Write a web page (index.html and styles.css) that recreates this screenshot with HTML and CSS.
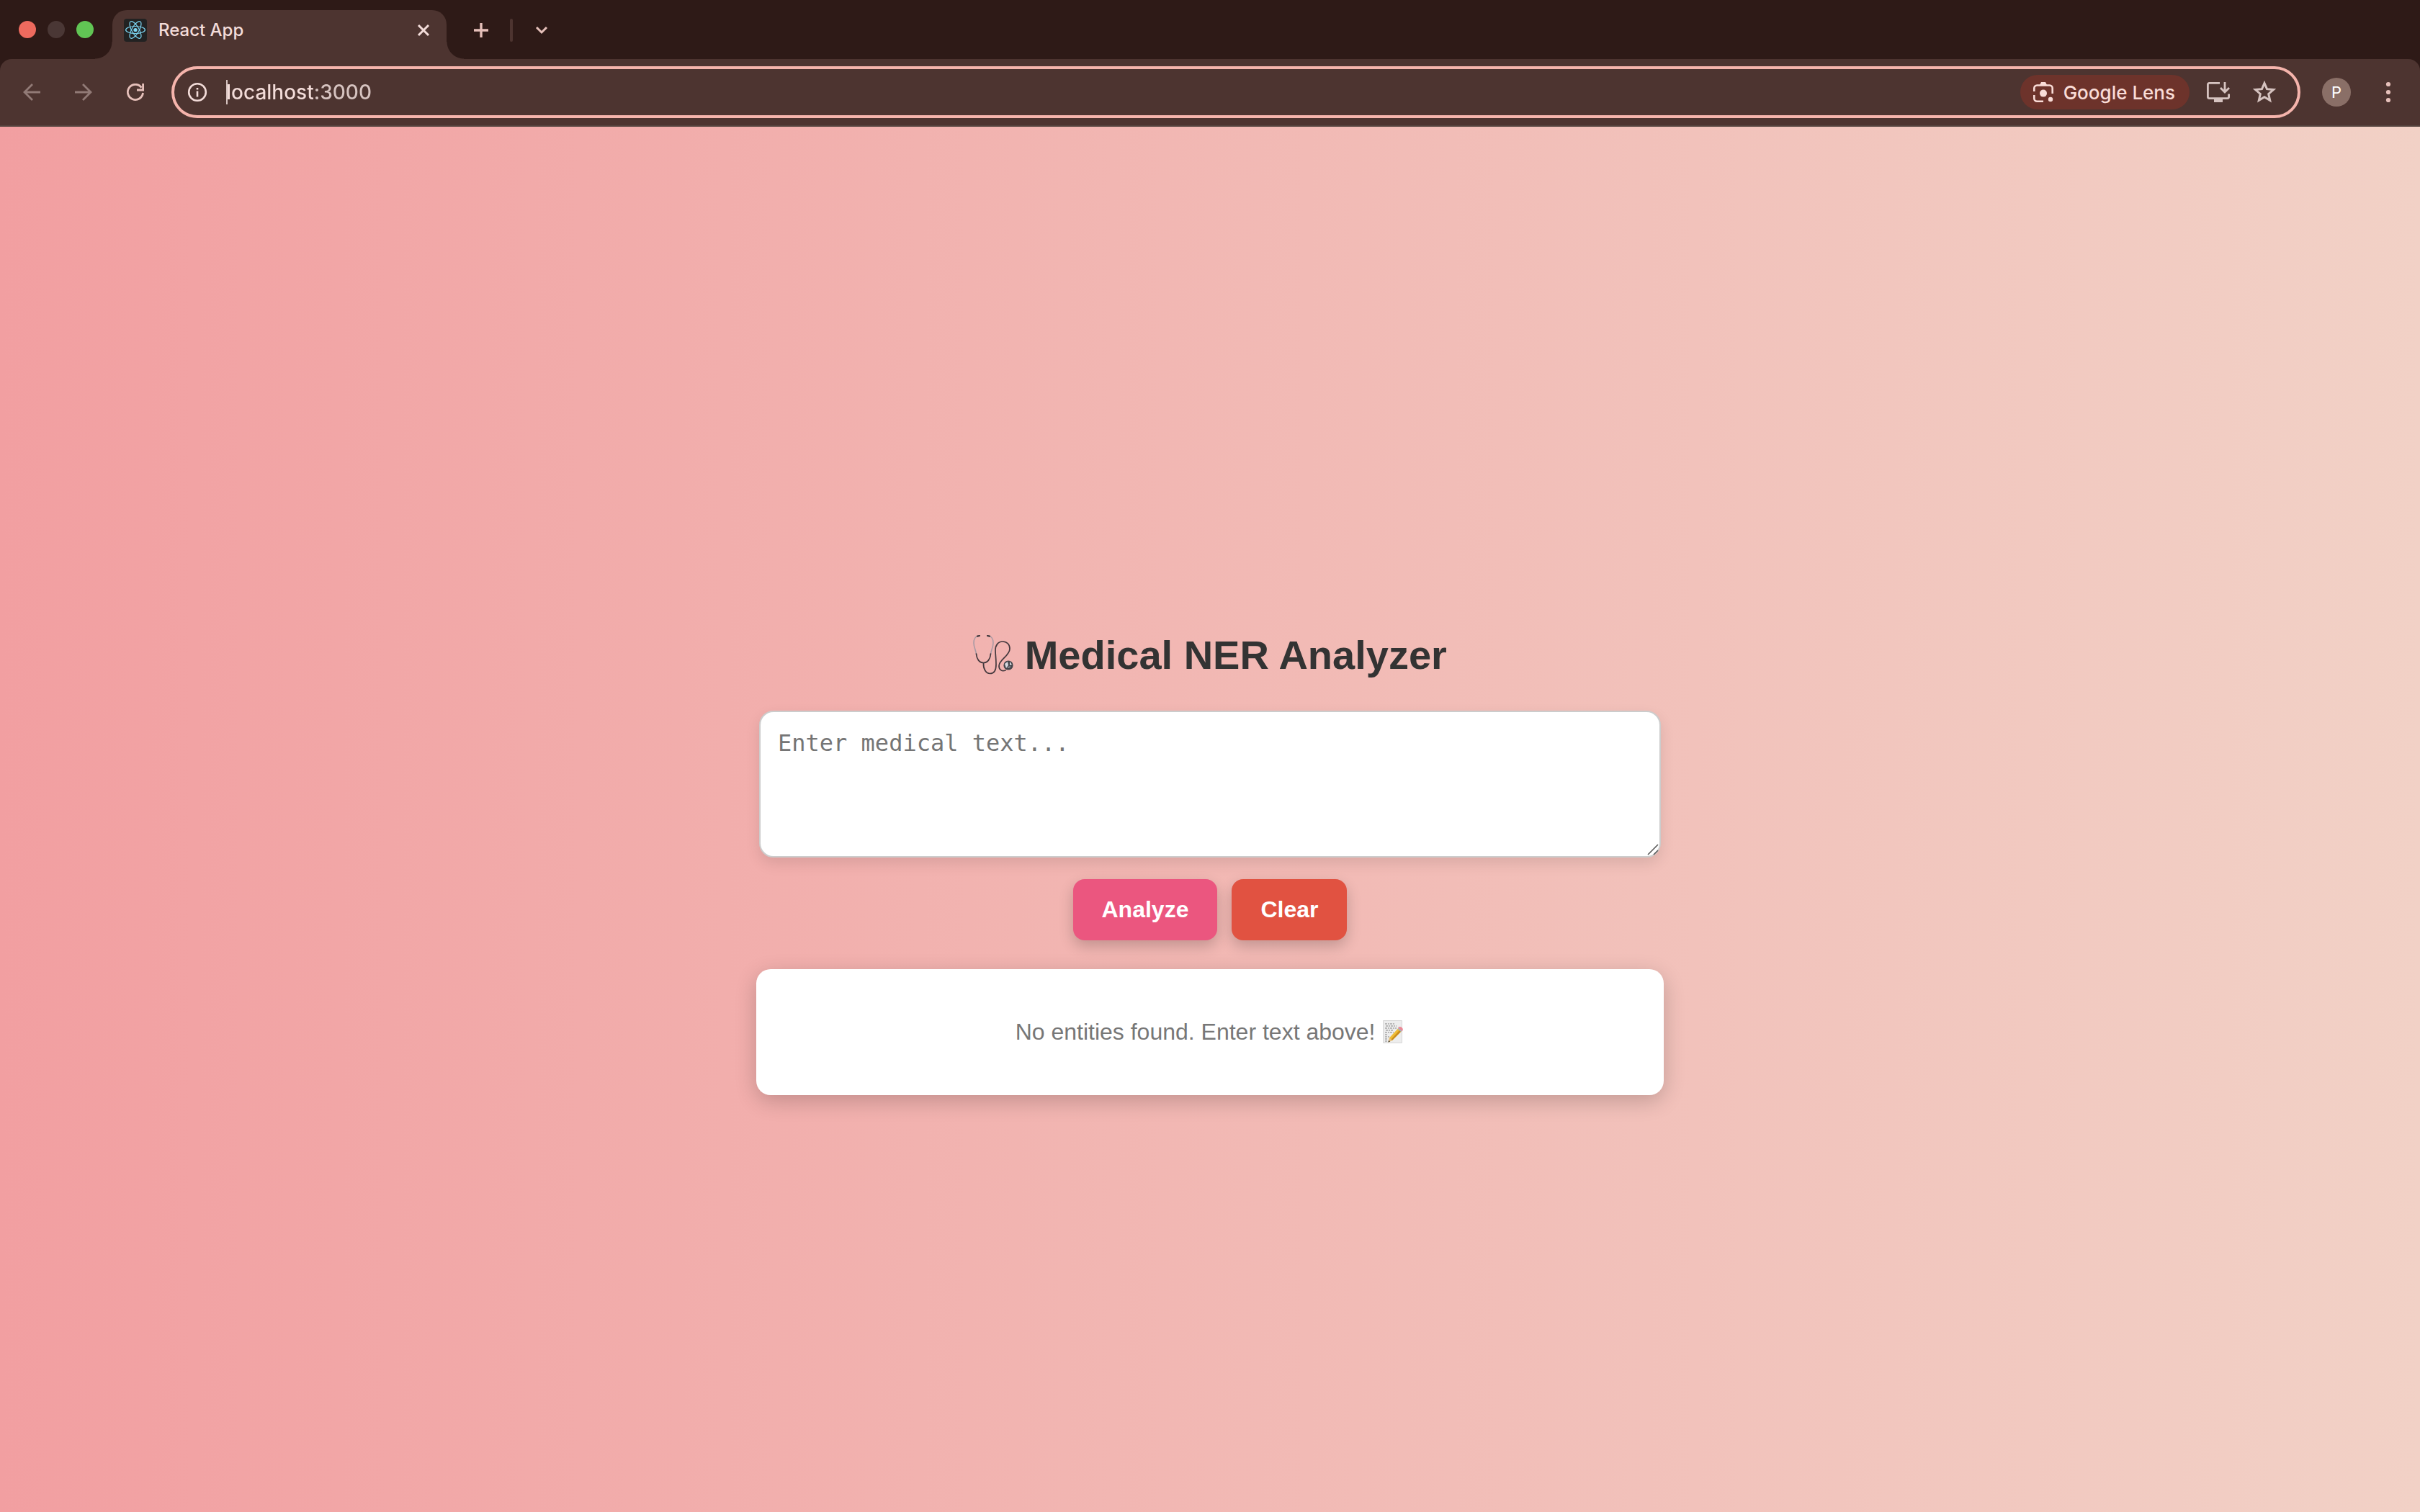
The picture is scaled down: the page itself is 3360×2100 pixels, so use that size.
FILE: index.html
```html
<!DOCTYPE html>
<html lang="en">
<head>
<meta charset="utf-8">
<title>React App</title>
<link rel="stylesheet" href="styles.css">
</head>
<body>
<header class="browser">
  <div class="tab-strip">
    <div class="window-controls">
      <button class="light light-close" aria-label="Close window"></button>
      <button class="light light-min" aria-label="Minimize window"></button>
      <button class="light light-zoom" aria-label="Zoom window"></button>
    </div>
    <div class="tab">
      <svg class="favicon" viewBox="0 0 32 32" aria-hidden="true">
        <rect width="32" height="32" rx="4" fill="#222"/>
        <g fill="none" stroke="#7cd5f2" stroke-width="1.2">
          <ellipse cx="16" cy="15.5" rx="13.4" ry="5"/>
          <ellipse cx="16" cy="15.5" rx="13.4" ry="5" transform="rotate(60 16 15.5)"/>
          <ellipse cx="16" cy="15.5" rx="13.4" ry="5" transform="rotate(120 16 15.5)"/>
        </g>
        <circle cx="16" cy="15.5" r="2.6" fill="#7cd5f2"/>
      </svg>
      <span class="tab-title">React App</span>
      <button class="icon-button tab-close" aria-label="Close tab">
        <svg width="24" height="24" viewBox="0 0 24 24"><path d="M5 5l14 14M19 5L5 19" fill="none" stroke="#f3dcd9" stroke-width="3"/></svg>
      </button>
    </div>
    <div class="strip-actions">
      <button class="icon-button" aria-label="New tab">
        <svg width="24" height="24" viewBox="0 0 24 24"><path d="M12 2v20M2 12h20" fill="none" stroke="#e6c0ba" stroke-width="3.4"/></svg>
      </button>
      <span class="strip-divider"></span>
      <button class="icon-button" aria-label="Search tabs">
        <svg width="24" height="24" viewBox="0 0 24 24"><path d="M5 8l7 7 7-7" fill="none" stroke="#e6c0ba" stroke-width="3"/></svg>
      </button>
    </div>
  </div>

  <div class="toolbar">
    <div class="nav-buttons">
      <button class="icon-button" aria-label="Back">
        <svg width="24" height="24" viewBox="0 0 24 24"><path d="M24 12H2M13 1L2 12l11 11" fill="none" stroke="#917a76" stroke-width="2.8"/></svg>
      </button>
      <button class="icon-button" aria-label="Forward">
        <svg width="24" height="24" viewBox="0 0 24 24"><path d="M0 12h22M11 1l11 11-11 11" fill="none" stroke="#917a76" stroke-width="2.8"/></svg>
      </button>
      <button class="icon-button" aria-label="Reload">
        <svg width="24" height="24" viewBox="0 0 24 24"><path d="M22.5 13A10.6 10.6 0 1 1 20.5 5.6" fill="none" stroke="#e6c0ba" stroke-width="2.8"/><path d="M24 0v10.4H14V7.6h7.2V0z" fill="#e6c0ba"/></svg>
      </button>
    </div>
    <div class="address-bar">
      <svg width="28" height="28" viewBox="0 0 28 28" aria-hidden="true"><circle cx="14" cy="14" r="11.8" fill="none" stroke="#f3dcd9" stroke-width="2.6"/><path d="M12.7 12.4h2.6v8h-2.6zM12.7 8h2.6v2.6h-2.6z" fill="#f3dcd9"/></svg>
      <span class="caret"></span>
      <input class="address" type="text" value="localhost:3000" aria-label="Address">
      <button class="lens">
        <svg width="28" height="28" viewBox="0 0 28 28" aria-hidden="true"><g fill="none" stroke="#f9dcd7" stroke-width="2.6"><path d="M1.3 13V8.5a4 4 0 0 1 4-4h17.4a4 4 0 0 1 4 4V16M1.3 18v4.7a4 4 0 0 0 4 4H14"/></g><path d="M9 4l2-4h6l2 4z" fill="#f9dcd7"/><circle cx="14" cy="15.6" r="5" fill="#f9dcd7"/><circle cx="24" cy="24" r="3.2" fill="#f9dcd7"/></svg>
        Google Lens
      </button>
      <div class="page-actions">
        <button class="icon-button" aria-label="Install app">
          <svg width="32" height="28" viewBox="0 0 32 28"><path d="M18 1.4H3.400a2 2 0 0 0-2 2v17.200a2 2 0 0 0 2 2h25.200a2 2 0 0 0 2-2V16.500" fill="none" stroke="#d6c3c0" stroke-width="2.8"/><path d="M10 22h12v6H10z" fill="#d6c3c0"/><path d="M25 0v14M19 8l6 6 6-6" fill="none" stroke="#d6c3c0" stroke-width="2.8"/></svg>
        </button>
        <button class="icon-button" aria-label="Bookmark this tab">
          <svg width="32" height="32" viewBox="0 0 32 32"><path d="M16 3.500l3.500 8.200 9 .8-6.800 6 2 8.800L16 22.700l-7.700 4.600 2-8.800-6.800-6 9-.8z" fill="none" stroke="#d6c3c0" stroke-width="3"/></svg>
        </button>
      </div>
    </div>
    <button class="avatar" aria-label="Profile">P</button>
    <button class="icon-button" aria-label="Menu">
      <svg width="8" height="30" viewBox="0 0 8 30"><g fill="#e6c0ba"><circle cx="4" cy="4" r="3.1"/><circle cx="4" cy="15" r="3.1"/><circle cx="4" cy="26" r="3.1"/></g></svg>
    </button>
  </div>
</header>

<main class="app">
  <h1 class="title"><svg class="title-icon" viewBox="0 0 56 56" role="img" aria-label="Stethoscope"><g fill="none" stroke-linecap="round"><path d="M9 2C4 2 1 6 1 12c0 6 3 10 3.500 16M20 2c5 0 8 4 8 10 0 6-3 10-3.500 16" stroke="#a99aa3" stroke-width="1.600"/><path d="M4.500 27c.5 7 4 12.500 10 12.500S24 34 24.500 27M14.500 40C14 48 18 54.500 23.500 54.500c6 0 8.500-5 8.500-12.500 0-9-1-14-1-20 0-7 4-12 10-12s10 4 10 10c0 10-15 15-15 24 0 5 4 8 9 6" stroke="#44383d" stroke-width="1.700"/><path d="M6 2.600L9 2M20 2l3 .6" stroke="#3d3438" stroke-width="2.200"/></g><circle cx="49" cy="43" r="6.600" fill="#45464b"/><path d="M44 41l4-3 1 5-3 4zM51 38l3 4-3 1z" fill="#d5d8df"/><path d="M48 46l4-1" stroke="#9da1aa" stroke-width="1.500"/></svg> Medical NER Analyzer</h1>
  <form class="analyzer">
    <div class="text-field">
      <textarea class="text-input" aria-label="Medical text" placeholder="Enter medical text..."></textarea>
      <svg class="grip" width="16" height="16" viewBox="0 0 16 16" aria-hidden="true"><path d="M1 15L15 1M9 15l6-6" stroke="#5c5c5c" stroke-width="1.600"/></svg>
    </div>
    <div class="actions">
      <button class="button button-primary" type="button">Analyze</button>
      <button class="button button-danger" type="reset">Clear</button>
    </div>
  </form>
  <section class="results">
    <p class="empty">No entities found. Enter text above! <svg class="memo" viewBox="0 0 32 32" role="img" aria-label="Memo"><path d="M2.500 .5h26v31h-26z" fill="#ededed" stroke="#d8d8d8"/><path d="M5 5h14M6 8h15M5 11h16M6 14h10M5 17h12M5 20h4M5 23h6M5 26h4M5 29h3" stroke="#858585" stroke-width="1" stroke-dasharray="3 1 2 1"/><path d="M9.500 30.500l1.500-6L23 11.500l4.500 4L15 28z" fill="#efbd36"/><path d="M13.500 26.500L25.500 13.500l2 2L15 28z" fill="#c98c1c"/><path d="M9.500 30.500l1.500-6 4 3.500z" fill="#e4bf86"/><path d="M9.500 30.500l.6-2.500 1.900 1.400z" fill="#333"/><path d="M22.500 12l1.700-1.800 4.500 4-1.700 1.800z" fill="#a9b2bd"/><path d="M24.200 10.200c2-1.500 6 1.500 4.500 4z" fill="#ea8a97" stroke="#ea8a97" stroke-width="1.500"/></svg></p>
  </section>
</main>
</body>
</html>
```
FILE: styles.css
```css
* {
  box-sizing: border-box;
}

body {
  margin: 0;
  min-height: 100vh;
  display: flex;
  flex-direction: column;
  font-family: "Liberation Sans", Arial, sans-serif;
  background: linear-gradient(to right, #f29fa1, #f2d1c6);
}

button {
  margin: 0;
  padding: 0;
  border: 0;
  background: none;
  font: inherit;
  cursor: pointer;
}

svg {
  display: block;
  flex: none;
}

/* Browser chrome */

.browser {
  font-family: Inter, "Noto Sans", sans-serif;
  background: #2e1a17;
}

.tab-strip {
  display: flex;
  align-items: flex-end;
  height: 82px;
}

.window-controls {
  display: flex;
  align-items: center;
  gap: 16px;
  height: 82px;
  padding: 0 26px;
}

.light {
  width: 24px;
  height: 24px;
  border-radius: 50%;
}

.light-close { background: #ed6a5e; }
.light-min { background: #4a3735; }
.light-zoom { background: #61c554; }

.tab {
  position: relative;
  display: flex;
  align-items: center;
  gap: 16px;
  width: 464px;
  height: 68px;
  padding: 0 20px 12px 16px;
  border-radius: 20px 20px 0 0;
  background: #4d3430;
}

.tab::before,
.tab::after {
  content: "";
  position: absolute;
  bottom: 0;
  width: 24px;
  height: 24px;
}

.tab::before {
  right: 100%;
  background: radial-gradient(circle at 0 0, transparent 23px, #4d3430 24px);
}

.tab::after {
  left: 100%;
  background: radial-gradient(circle at 100% 0, transparent 23px, #4d3430 24px);
}

.favicon {
  width: 32px;
  height: 32px;
}

.tab-title {
  flex: 1;
  font-size: 24px;
  line-height: 32px;
  font-weight: 500;
  color: #f3dcd9;
}

.strip-actions {
  display: flex;
  align-items: center;
  gap: 28px;
  height: 80px;
  padding-left: 36px;
}

.strip-divider {
  width: 4px;
  height: 32px;
  border-radius: 2px;
  background: #4d3430;
}

.toolbar {
  display: flex;
  align-items: center;
  height: 94px;
  padding: 0 40px 0 32px;
  border-bottom: 2px solid #54443f;
  border-radius: 16px 16px 0 0;
  background: #4d3430;
}

.nav-buttons {
  display: flex;
  gap: 48px;
  margin-right: 38px;
}

.address-bar {
  flex: 1;
  display: flex;
  align-items: center;
  height: 72px;
  padding: 0 30px 0 18px;
  border: 4px solid #f5b4ac;
  border-radius: 36px;
}

.caret {
  width: 2px;
  height: 34px;
  margin: 0 -2px 0 26px;
  background: #d6c3c0;
}

.address {
  flex: 1;
  min-width: 0;
  padding: 0;
  border: 0;
  outline: 0;
  font: 500 28px/36px Inter, "Noto Sans", sans-serif;
  color: transparent;
  background: linear-gradient(to right, #f3dcd9 123px, #d6c3c0 123px);
  background-clip: text;
}

.lens {
  display: flex;
  align-items: center;
  gap: 14px;
  height: 48px;
  padding: 0 20px 0 18px;
  border-radius: 24px;
  font-size: 26px;
  font-weight: 500;
  color: #f9dcd7;
  background: #6d332b;
}

.page-actions {
  display: flex;
  align-items: center;
  gap: 32px;
  margin-left: 24px;
}

.avatar {
  width: 40px;
  height: 40px;
  margin: 0 48px 0 30px;
  border-radius: 50%;
  font-size: 22px;
  color: #fff;
  background: #8a6f67;
}

/* Application */

.app {
  flex: 1;
  display: flex;
  flex-direction: column;
  align-items: center;
  justify-content: center;
  padding: 122px 40px 0;
}

.title {
  margin: 0 0 45px;
  font-size: 56px;
  line-height: 64px;
  color: #333;
}

.title-icon {
  display: inline-block;
  width: 56px;
  height: 56px;
  vertical-align: -8px;
}

.analyzer {
  width: 100%;
  max-width: 1252px;
}

.text-field {
  position: relative;
}

.text-input {
  display: block;
  width: 100%;
  height: 204px;
  padding: 24px;
  border: 2px solid #ccc;
  border-radius: 20px;
  resize: none;
  font: 32px "DejaVu Sans Mono", monospace;
  background: #fff;
  box-shadow: 0 8px 20px rgba(0, 0, 0, 0.1);
}

.text-input::placeholder {
  color: #757575;
}

.grip {
  position: absolute;
  right: 3px;
  bottom: 3px;
}

.actions {
  display: flex;
  justify-content: center;
  gap: 20px;
  margin: 30px 0 40px;
}

.button {
  padding: 24px 40px;
  border-radius: 16px;
  font-size: 32px;
  line-height: 37px;
  font-weight: bold;
  color: #fff;
  box-shadow: 0 8px 20px rgba(0, 0, 0, 0.2);
}

.button-primary { background: #eb567f; }
.button-danger { background: #e15241; }

.results {
  width: 100%;
  max-width: 1260px;
  padding: 69px 40px;
  border-radius: 20px;
  background: #fff;
  box-shadow: 0 8px 30px rgba(0, 0, 0, 0.2);
}

.empty {
  margin: 0;
  font-size: 32px;
  line-height: 37px;
  text-align: center;
  color: #777;
}

.memo {
  display: inline-block;
  width: 32px;
  height: 32px;
  vertical-align: -5px;
}
```
